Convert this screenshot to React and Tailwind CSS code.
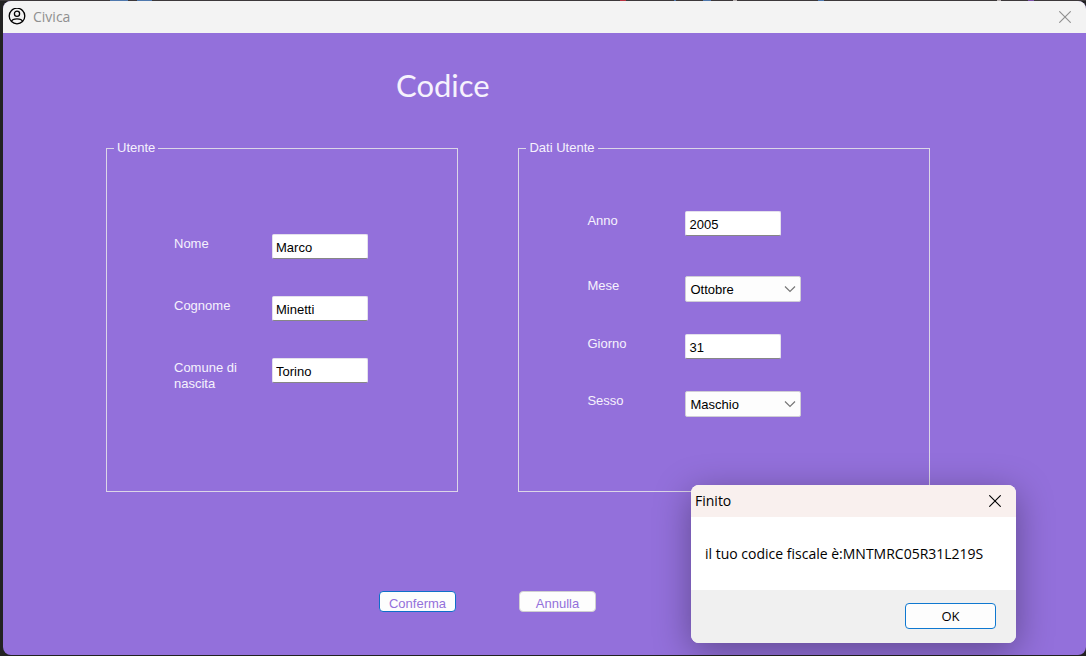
import { useState } from "react";

const desktopMarks = [
  { x: 110, w: 18, fill: "#4f78ad" },
  { x: 137, w: 15, fill: "#4f78ad" },
  { x: 620, w: 6, fill: "#b8323f" },
  { x: 674, w: 2, fill: "#4f78ad" },
  { x: 703, w: 8, fill: "#4f78ad" },
  { x: 733, w: 4, fill: "#b9b2b2" },
  { x: 818, w: 6, fill: "#4f78ad" },
  { x: 997, w: 4, fill: "#b9b2b2" },
  { x: 1028, w: 6, fill: "#7a52a8" },
];

function CloseIcon() {
  return (
    <svg viewBox="0 0 12 12" className="size-3" fill="none" stroke="currentColor" aria-hidden="true">
      <path d="M.3.3 11.7 11.7M11.7.3.3 11.7" strokeWidth="1.1" />
    </svg>
  );
}

function UserIcon() {
  return (
    <svg viewBox="0 0 18 18" className="size-[18px]" fill="none" stroke="#000" strokeWidth="1.3" aria-hidden="true">
      <circle cx="9" cy="8" r="7.8" />
      <circle cx="9" cy="5.7" r="2.6" />
      <path d="M3.400 13.500c.6-1.700 2.800-2.600 5.600-2.600s5 .9 5.600 2.600" />
    </svg>
  );
}

function Row({ id, label, children }) {
  return (
    <div className="flex items-start">
      <label htmlFor={id} className="w-[98px] shrink-0 pt-0.5 pr-6 leading-4">
        {label}
      </label>
      {children}
    </div>
  );
}

function TextField({ id, label, initial }) {
  return (
    <Row id={id} label={label}>
      <input
        id={id}
        type="text"
        defaultValue={initial}
        className="h-[25px] w-24 rounded-[2px] border border-[#e4e0ec] border-b-[#868686] bg-white px-[3px] pt-0.5 text-black outline-none"
      />
    </Row>
  );
}

function SelectField({ id, label, initial, options }) {
  return (
    <Row id={id} label={label}>
      <div className="grid items-center">
        <select
          id={id}
          defaultValue={initial}
          className="col-start-1 row-start-1 h-[26px] w-[116px] appearance-none rounded-[2px] border border-[#d0cdd6] bg-[#fdfdfd] pt-0.5 pr-6 pl-1 text-black outline-none"
        >
          {options.map((o) => (
            <option key={o}>{o}</option>
          ))}
        </select>
        <svg
          viewBox="0 0 12 8"
          className="pointer-events-none col-start-1 row-start-1 mr-[5px] h-2 w-3 justify-self-end"
          fill="none"
          stroke="#777"
          aria-hidden="true"
        >
          <path d="M1 1.500 6 6.500l5-5" strokeWidth="1.200" />
        </svg>
      </div>
    </Row>
  );
}

const mesi = [
  "Gennaio", "Febbraio", "Marzo", "Aprile", "Maggio", "Giugno",
  "Luglio", "Agosto", "Settembre", "Ottobre", "Novembre", "Dicembre",
];

export default function App() {
  const [open, setOpen] = useState(true);
  return (
    <div className="relative flex min-h-screen flex-col bg-[#222] pb-px font-['Liberation_Sans',sans-serif] text-[13px]">
      <svg className="h-px w-full bg-[#3c383a]" aria-hidden="true">
        {desktopMarks.map((m) => (
          <rect key={m.x} x={m.x} y="0" width={m.w} height="1" fill={m.fill} />
        ))}
      </svg>
      <div className="ml-[3px] flex flex-1 flex-col overflow-hidden rounded-lg bg-[#9370db]">
        <header className="flex h-8 items-center bg-[#f3f3f3] pr-[15px] pl-[5px] font-['Open_Sans',sans-serif] text-sm text-[#8f8f8f]">
          <UserIcon />
          <span className="ml-[7px]">Civica</span>
          <button type="button" aria-label="Chiudi finestra" className="ml-auto">
            <CloseIcon />
          </button>
        </header>
        <main className="pt-8 pr-[156px] pl-[103px] text-[#f6f2fd]">
          <h1 className="pl-[290px] font-['Lato',sans-serif] text-[31px] leading-10 font-normal">Codice</h1>
          <form onSubmit={(e) => { e.preventDefault(); setOpen(true); }}>
            <div className="mt-[35px] grid grid-cols-[352fr_411fr] gap-[60px]">
              <fieldset className="min-h-[352px] min-w-0 border border-[#dcd6e8] pl-[67px]">
                <legend className="-ml-[60px] px-[3px] leading-4">Utente</legend>
                <div className="flex flex-col gap-[37px] pt-[78px]">
                  <TextField id="nome" label="Nome" initial="Marco" />
                  <TextField id="cognome" label="Cognome" initial="Minetti" />
                  <TextField id="comune" label="Comune di nascita" initial="Torino" />
                </div>
              </fieldset>
              <fieldset className="min-h-[352px] min-w-0 border border-[#dcd6e8] pl-[68px]">
                <legend className="-ml-[61px] px-[3px] leading-4">Dati Utente</legend>
                <div className="flex flex-col gap-8 pt-[55px]">
                  <div className="pb-2">
                    <TextField id="anno" label="Anno" initial="2005" />
                  </div>
                  <SelectField id="mese" label="Mese" initial="Ottobre" options={mesi} />
                  <TextField id="giorno" label="Giorno" initial="31" />
                  <SelectField id="sesso" label="Sesso" initial="Maschio" options={["Maschio", "Femmina"]} />
                </div>
              </fieldset>
            </div>
            <div className="mt-[99px] flex gap-[63px] pl-[273px] text-[#9370db]">
              <button type="submit" className="h-[21px] w-[77px] rounded-[4px] border border-[#0f6fc9] bg-[#fdfdfd] pt-1 leading-4">
                Conferma
              </button>
              <button type="reset" className="h-[21px] w-[77px] rounded-[4px] border border-[#d0d0d0] bg-[#fdfdfd] pt-1 leading-4">
                Annulla
              </button>
            </div>
          </form>
        </main>
      </div>
      {open && (
        <div
          role="dialog"
          aria-labelledby="finito"
          className="absolute right-[70px] bottom-[13px] w-[325px] overflow-hidden rounded-lg bg-white font-['Open_Sans',sans-serif] text-[13px] text-black shadow-[0_8px_36px_rgba(0,0,0,0.35)]"
        >
          <div className="flex h-8 items-center justify-between bg-[#f9f0ee] pr-[15px] pl-1 text-sm">
            <h2 id="finito">Finito</h2>
            <button type="button" aria-label="Chiudi" onClick={() => setOpen(false)}>
              <CloseIcon />
            </button>
          </div>
          <p className="px-3.5 pt-[27px] pb-[26px] text-sm leading-5 whitespace-nowrap">
            il tuo codice fiscale è:MNTMRC05R31L219S
          </p>
          <div className="flex justify-end bg-[#f0f0f0] pt-[13px] pr-5 pb-3.5">
            <button
              type="button"
              onClick={() => setOpen(false)}
              className="h-[26px] w-[91px] rounded-[4px] border border-[#0f78d0] bg-[#fdfdfd] leading-4"
            >
              OK
            </button>
          </div>
        </div>
      )}
    </div>
  );
}
